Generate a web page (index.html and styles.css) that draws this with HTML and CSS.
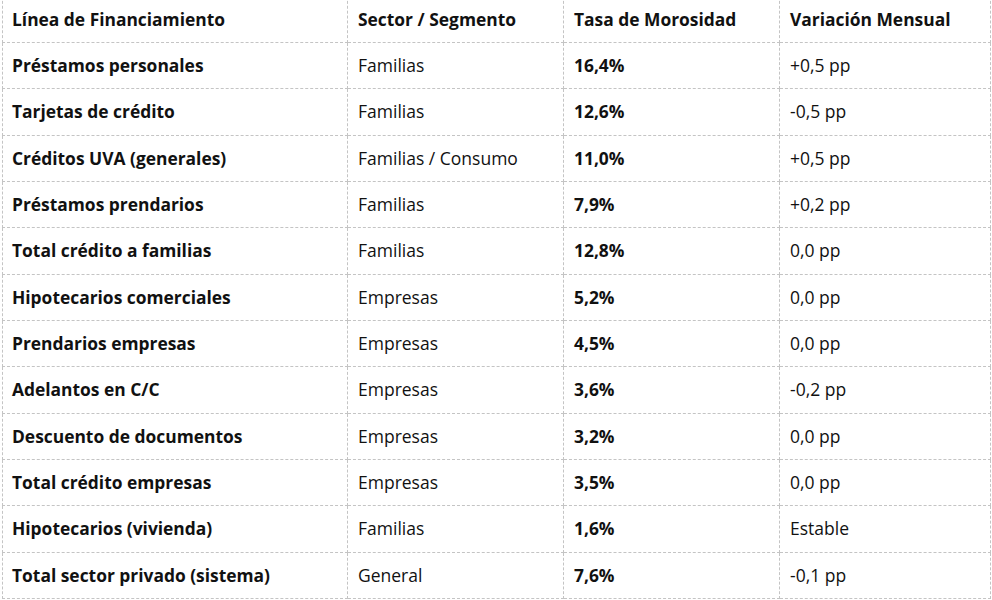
FILE: index.html
```html
<!DOCTYPE html>
<html lang="es">
<head>
<meta charset="utf-8">
<title>Morosidad</title>
<link rel="stylesheet" href="styles.css">
</head>
<body>
<table class="grid">
  <colgroup>
    <col class="c1"><col class="c2"><col class="c3"><col class="c4">
  </colgroup>
  <thead>
    <tr><th>Línea de Financiamiento</th><th>Sector / Segmento</th><th>Tasa de Morosidad</th><th>Variación Mensual</th></tr>
  </thead>
  <tbody>
    <tr><td class="b">Préstamos personales</td><td>Familias</td><td class="b">16,4%</td><td>+0,5 pp</td></tr>
    <tr><td class="b">Tarjetas de crédito</td><td>Familias</td><td class="b">12,6%</td><td>-0,5 pp</td></tr>
    <tr><td class="b">Créditos UVA (generales)</td><td>Familias / Consumo</td><td class="b">11,0%</td><td>+0,5 pp</td></tr>
    <tr><td class="b">Préstamos prendarios</td><td>Familias</td><td class="b">7,9%</td><td>+0,2 pp</td></tr>
    <tr><td class="b">Total crédito a familias</td><td>Familias</td><td class="b">12,8%</td><td>0,0 pp</td></tr>
    <tr><td class="b">Hipotecarios comerciales</td><td>Empresas</td><td class="b">5,2%</td><td>0,0 pp</td></tr>
    <tr><td class="b">Prendarios empresas</td><td>Empresas</td><td class="b">4,5%</td><td>0,0 pp</td></tr>
    <tr><td class="b">Adelantos en C/C</td><td>Empresas</td><td class="b">3,6%</td><td>-0,2 pp</td></tr>
    <tr><td class="b">Descuento de documentos</td><td>Empresas</td><td class="b">3,2%</td><td>0,0 pp</td></tr>
    <tr><td class="b">Total crédito empresas</td><td>Empresas</td><td class="b">3,5%</td><td>0,0 pp</td></tr>
    <tr><td class="b">Hipotecarios (vivienda)</td><td>Familias</td><td class="b">1,6%</td><td>Estable</td></tr>
    <tr><td class="b">Total sector privado (sistema)</td><td>General</td><td class="b">7,6%</td><td>-0,1 pp</td></tr>
  </tbody>
</table>
</body>
</html>
```

FILE: styles.css
```css
html, body {
  margin: 0;
  padding: 0;
  background: #ffffff;
}
body {
  font-family: "Open Sans", "Noto Sans", "Liberation Sans", sans-serif;
  font-size: 17.5px;
  color: #111111;
  overflow: hidden;
}
.grid {
  border-collapse: collapse;
  table-layout: fixed;
  width: 988px;
  margin: -4.33px 0 0 2px;
}
.c1 { width: 345px; }
.c2 { width: 216px; }
.c3 { width: 216px; }
.c4 { width: 211px; }
.grid th,
.grid td {
  border: 1px dashed #c4c4c4;
  padding: 12px 10px 12px 9px;
  line-height: 21.33px;
  text-align: left;
  vertical-align: middle;
  white-space: nowrap;
}
.grid th,
.grid td.b {
  font-weight: 700;
  font-size: 17.4px;
}
.grid td {
  font-weight: 400;
}
.grid td:not(:first-child),
.grid th:not(:first-child) {
  padding-left: 10px;
}
```
